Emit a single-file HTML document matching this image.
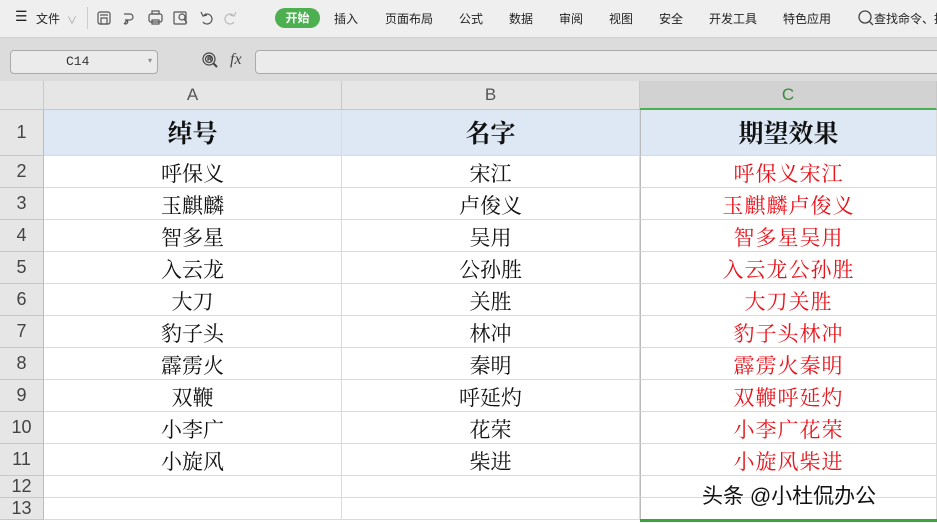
<!DOCTYPE html>
<html><head><meta charset="utf-8"><style>
*{margin:0;padding:0;box-sizing:border-box}
body{width:937px;height:523px;overflow:hidden;background:#fff;position:relative;font-family:"Liberation Sans","Noto Sans CJK SC",sans-serif}
.a{position:absolute}
.tb{left:0;top:0;width:937px;height:37px;background:#efefef}
.tb span{position:absolute;top:10px;font-size:12px;color:#222;white-space:nowrap}
.fb{left:0;top:37px;width:937px;height:44px;background:#dcdcdc;border-top:1px solid #d0d0d0}
.ch{top:81px;height:29px;background:#e6e6e6;border-bottom:1px solid #c8c8c8;border-right:1px solid #c8c8c8;text-align:center;font-size:17px;color:#555;line-height:28px}
.rh{left:0;width:44px;background:#e6e6e6;border-bottom:1px solid #c8c8c8;border-right:1px solid #bbb;text-align:center;font-size:18px;color:#444}
.cell{border-bottom:1px solid #dadada;border-right:1px solid #dadada;text-align:center;font-family:"Liberation Serif","Noto Serif CJK SC",serif;font-size:21px;color:#111;white-space:nowrap}
.r{color:#e8141c;letter-spacing:1px}
.t{background:#dde8f4;font-weight:bold;font-size:25px}
svg{position:absolute}
</style></head><body>
<div class="a tb">
<span style="left:15px;font-size:14px;top:8px">☰</span><span style="left:36px">文件</span><span style="left:67px;color:#999;font-size:10px;top:12px">∨</span>
<div class="a" style="left:87px;top:7px;width:1px;height:22px;background:#ccc"></div>
<svg width="160" height="37" style="left:90px;top:0" fill="none" stroke="#555" stroke-width="1.2">
<rect x="8" y="12" width="12" height="12" rx="2"/><rect x="11" y="18" width="6" height="6"/><line x1="10" y1="15" x2="18" y2="15"/>
<path d="M34 14h6a3 3 0 010 6h-3l-2 3M35 20a2 2 0 11-1 3"/>
<rect x="59" y="14" width="13" height="8" rx="2"/><rect x="62" y="11" width="7" height="3"/><rect x="62" y="20" width="7" height="4"/>
<rect x="84" y="12" width="12" height="12" rx="1"/><circle cx="92" cy="17" r="3"/><line x1="94" y1="19" x2="97" y2="23"/>
<path d="M114 15a5 5 0 11-1 7M111 12l2 4 4-1"/>
<path stroke="#bbb" d="M143 15a5 5 0 10 1 7M146 12l-2 4-4-1"/>
<path d="M162 15h6M163 18l2 3 2-3"/>
</svg>
<div class="a" style="left:275px;top:8px;width:45px;height:20px;border-radius:10px;background:#4caf50;color:#fff;font-size:12px;font-weight:bold;text-align:center;line-height:20px">开始</div>
<span style="left:334px">插入</span><span style="left:385px">页面布局</span><span style="left:459px">公式</span><span style="left:509px">数据</span><span style="left:559px">审阅</span><span style="left:609px">视图</span><span style="left:659px">安全</span><span style="left:709px">开发工具</span><span style="left:783px">特色应用</span>
<svg width="18" height="20" style="left:857px;top:9px" fill="none" stroke="#444" stroke-width="1.3"><circle cx="8" cy="8" r="6"/><line x1="12" y1="12" x2="16" y2="16"/></svg>
<span style="left:874px">查找命令、搜</span>
</div>
<div class="a fb">
<div class="a" style="left:10px;top:12px;width:148px;height:24px;border:1px solid #aaa;border-radius:4px;background:#ebebeb;font-family:'Liberation Mono',monospace;font-size:13px;line-height:22px;padding-left:55px;color:#333">C14<span style="position:absolute;right:5px;font-size:8px;color:#888">▾</span></div>
<svg width="20" height="20" style="left:202px;top:14px" fill="none" stroke="#444" stroke-width="1.2"><circle cx="7" cy="7" r="6"/><circle cx="7" cy="7" r="3.5"/><path d="M6 5v4M6 5h2a1 1 0 010 2H6M8 7l1.5 2"/><line x1="11" y1="11" x2="15" y2="15" stroke-width="2"/></svg>
<span class="a" style="left:230px;top:13px;font-family:'Liberation Serif',serif;font-style:italic;font-size:16px;color:#444">fx</span>
<div class="a" style="left:255px;top:12px;width:690px;height:24px;border:1px solid #aaa;border-radius:4px;background:#ebebeb"></div>
</div>
<div class="a ch" style="left:0;width:44px"><svg width="44" height="28"><path d="M22 21h13V8z" fill="#bbb"/></svg></div>
<div class="a ch" style="left:44px;width:298px">A</div>
<div class="a ch" style="left:342px;width:298px">B</div>
<div class="a ch" style="left:640px;width:297px;background:#d2d2d2;color:#3a8a3a;border-bottom:2px solid #4caf50">C</div>
<div id="g"></div>
<div class="a" style="left:640px;top:519px;width:297px;height:3px;background:#3aa33a"></div>
<div class="a" style="left:702px;top:480px;font-size:21px;color:#111;white-space:nowrap;text-shadow:0 0 2px #fff,1px 1px 1px #fff">头条 @小杜侃办公</div>
<script>
var A=["绰号","呼保义","玉麒麟","智多星","入云龙","大刀","豹子头","霹雳火","双鞭","小李广","小旋风","",""],
B=["名字","宋江","卢俊义","吴用","公孙胜","关胜","林冲","秦明","呼延灼","花荣","柴进","",""];
var tops=[110,156,188,220,252,284,316,348,380,412,444,476,498],h=[46,32,32,32,32,32,32,32,32,32,32,22,22],s="";
for(var i=0;i<13;i++){var t=tops[i],hh=h[i],lh="line-height:"+(hh-1)+"px;",pt=(i>0&&i<11)?"padding-top:3px;":(i==0?"padding-top:2px;":"");
s+='<div class="a rh" style="top:'+t+'px;height:'+hh+'px;'+lh+'">'+(i+1)+'</div>';
var c=i==0?" t":"";
s+='<div class="a cell'+c+'" style="left:44px;width:298px;top:'+t+'px;height:'+hh+'px;'+lh+pt+'">'+A[i]+'</div>';
s+='<div class="a cell'+c+'" style="left:342px;width:298px;top:'+t+'px;height:'+hh+'px;'+lh+pt+'">'+B[i]+'</div>';
var C=i==0?"期望效果":A[i]+B[i];
s+='<div class="a cell'+c+(i>0?" r":"")+'" style="left:640px;width:297px;top:'+t+'px;height:'+hh+'px;'+lh+pt+'border-left:1px solid #bbb">'+C+'</div>';}
document.getElementById("g").innerHTML=s;
</script>
</body></html>
